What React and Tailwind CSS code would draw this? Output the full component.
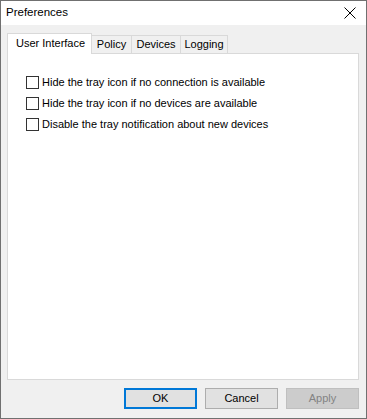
import React from 'react';

const font = { fontFamily: '"Liberation Sans", Arial, sans-serif' };

const tabs = ['Policy', 'Devices', 'Logging'];
const options = [
  'Hide the tray icon if no connection is available',
  'Hide the tray icon if no devices are available',
  'Disable the tray notification about new devices',
];

export default function App() {
  return (
    <div
      className="w-[367px] h-[419px] bg-[#f0f0f0] border border-[#707070] flex flex-col text-[11px] text-black"
      style={font}
    >
      {/* Title bar */}
      <div className="h-[24px] bg-white flex items-center justify-between pl-[5px] pr-[9px] shrink-0">
        <span className="leading-none text-[11.5px]">Preferences</span>
        <svg width="12" height="12" viewBox="0 0 12 12" className="mr-[1px]">
          <path d="M0.5 0.5 L11.5 11.5 M11.5 0.5 L0.5 11.5" stroke="#000" strokeWidth="1" />
        </svg>
      </div>

      {/* Body */}
      <div className="flex-1 flex flex-col px-[6px] pt-[8px]">
        {/* Tabs */}
        <div className="flex items-end h-[20px] relative z-10 shrink-0">
          <div className="h-[21px] mb-[-1px] w-[85px] bg-white border border-b-0 border-[#d9d9d9] flex items-center pl-[8px] pb-[2px]">
            User Interface
          </div>
          {tabs.map((t, i) => (
            <div
              key={t}
              className={`h-[18px] border border-b-0 border-l-0 border-[#d9d9d9] bg-[#f0f0f0] flex items-center justify-center ${
                i === 0 ? 'w-[40px]' : i === 1 ? 'w-[49px]' : 'w-[47px]'
              }`}
            >
              {t}
            </div>
          ))}
        </div>

        {/* Panel */}
        <div className="h-[327px] bg-white border border-[#d9d9d9] flex flex-col gap-[8px] pl-[18px] pt-[22px] mr-[1px]">
          {options.map((o) => (
            <label key={o} className="flex items-center gap-[3px] h-[13px]">
              <span className="w-[13px] h-[13px] border border-[#333333] bg-white shrink-0" />
              <span className="leading-none whitespace-nowrap">{o}</span>
            </label>
          ))}
        </div>

        {/* Buttons */}
        <div className="flex justify-end gap-[8px] mt-[8px] mr-[1px]">
          <button className="w-[73px] h-[21px] bg-[#e1e1e1] border-2 border-[#0078d7] flex items-center justify-center">
            OK
          </button>
          <button className="w-[73px] h-[21px] bg-[#e1e1e1] border border-[#adadad] flex items-center justify-center">
            Cancel
          </button>
          <button className="w-[73px] h-[21px] bg-[#cccccc] border border-[#bfbfbf] text-[#838383] flex items-center justify-center">
            Apply
          </button>
        </div>
      </div>
    </div>
  );
}
